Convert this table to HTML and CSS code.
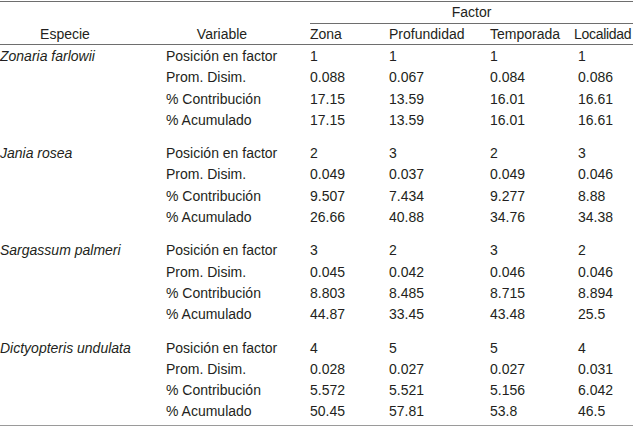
FILE: index.html
```html
<!DOCTYPE html>
<html lang="es">
<head>
<meta charset="utf-8">
<title>Factor table</title>
<link rel="stylesheet" href="styles.css">
</head>
<body>
<table class="tbl">
  <colgroup>
    <col class="c-sp"><col class="c-var"><col class="c-z"><col class="c-p"><col class="c-t"><col class="c-l">
  </colgroup>
  <thead>
    <tr class="h1">
      <th></th><th></th>
      <th colspan="4" class="factor"><span>Factor</span></th>
    </tr>
    <tr class="h2">
      <th class="h-sp">Especie</th>
      <th class="h-var">Variable</th>
      <th class="h-num">Zona</th>
      <th class="h-num">Profundidad</th>
      <th class="h-num">Temporada</th>
      <th class="h-num h-loc">Localidad</th>
    </tr>
  </thead>
  <tbody class="grp">
    <tr><td class="sp">Zonaria farlowii</td><td>Posición en factor</td><td>1</td><td>1</td><td>1</td><td class="loc">1</td></tr>
    <tr><td></td><td>Prom. Disim.</td><td>0.088</td><td>0.067</td><td>0.084</td><td class="loc">0.086</td></tr>
    <tr><td></td><td>% Contribución</td><td>17.15</td><td>13.59</td><td>16.01</td><td class="loc">16.61</td></tr>
    <tr><td></td><td>% Acumulado</td><td>17.15</td><td>13.59</td><td>16.01</td><td class="loc">16.61</td></tr>
  </tbody>
  <tbody class="grp">
    <tr><td class="sp">Jania rosea</td><td>Posición en factor</td><td>2</td><td>3</td><td>2</td><td class="loc">3</td></tr>
    <tr><td></td><td>Prom. Disim.</td><td>0.049</td><td>0.037</td><td>0.049</td><td class="loc">0.046</td></tr>
    <tr><td></td><td>% Contribución</td><td>9.507</td><td>7.434</td><td>9.277</td><td class="loc">8.88</td></tr>
    <tr><td></td><td>% Acumulado</td><td>26.66</td><td>40.88</td><td>34.76</td><td class="loc">34.38</td></tr>
  </tbody>
  <tbody class="grp">
    <tr><td class="sp">Sargassum palmeri</td><td>Posición en factor</td><td>3</td><td>2</td><td>3</td><td class="loc">2</td></tr>
    <tr><td></td><td>Prom. Disim.</td><td>0.045</td><td>0.042</td><td>0.046</td><td class="loc">0.046</td></tr>
    <tr><td></td><td>% Contribución</td><td>8.803</td><td>8.485</td><td>8.715</td><td class="loc">8.894</td></tr>
    <tr><td></td><td>% Acumulado</td><td>44.87</td><td>33.45</td><td>43.48</td><td class="loc">25.5</td></tr>
  </tbody>
  <tbody class="grp last">
    <tr><td class="sp">Dictyopteris undulata</td><td>Posición en factor</td><td>4</td><td>5</td><td>5</td><td class="loc">4</td></tr>
    <tr><td></td><td>Prom. Disim.</td><td>0.028</td><td>0.027</td><td>0.027</td><td class="loc">0.031</td></tr>
    <tr><td></td><td>% Contribución</td><td>5.572</td><td>5.521</td><td>5.156</td><td class="loc">6.042</td></tr>
    <tr><td></td><td>% Acumulado</td><td>50.45</td><td>57.81</td><td>53.8</td><td class="loc">46.5</td></tr>
  </tbody>
</table>
</body>
</html>
```
FILE: styles.css
```css
html, body {
  margin: 0;
  padding: 0;
  background: #ffffff;
}
body {
  padding-top: 1px;
}
.tbl {
  width: 633px;
  table-layout: fixed;
  border-collapse: collapse;
  border-spacing: 0;
  font-family: "Liberation Sans", Arial, sans-serif;
  font-size: 14px;
  color: #231f20;
  border-top: 1px solid #6e6e6e;
  border-bottom: 3px solid #9a9a9a;
}
.c-sp { width: 166px; }
.c-var { width: 144px; }
.c-z { width: 79px; }
.c-p { width: 101px; }
.c-t { width: 84px; }
.c-l { width: 59px; }

th, td {
  padding: 0;
  font-weight: normal;
  text-align: left;
  white-space: nowrap;
  vertical-align: middle;
}
.h1 th {
  height: 21px;
  line-height: 21px;
  padding: 0;
}
.factor {
  text-align: center;
  border-bottom: 1px solid #6e6e6e;
}
.h2 th {
  height: 20px;
  line-height: 20px;
  border-bottom: 1px solid #6e6e6e;
}
.h-sp {
  text-align: center;
  padding-right: 36px;
}
.h-var {
  text-align: center;
  padding-right: 32px;
}
.h-loc {
  letter-spacing: -0.3px;
}
td {
  height: 21.3px;
  line-height: 21.3px;
}
td.loc {
  padding-left: 4px;
}
.sp {
  font-style: italic;
}
.grp tr:first-child td {
  padding-top: 12px;
}
.grp:first-of-type tr:first-child td {
  padding-top: 1px;
}
.grp.last tr:last-child td {
  padding-bottom: 2px;
}
```
